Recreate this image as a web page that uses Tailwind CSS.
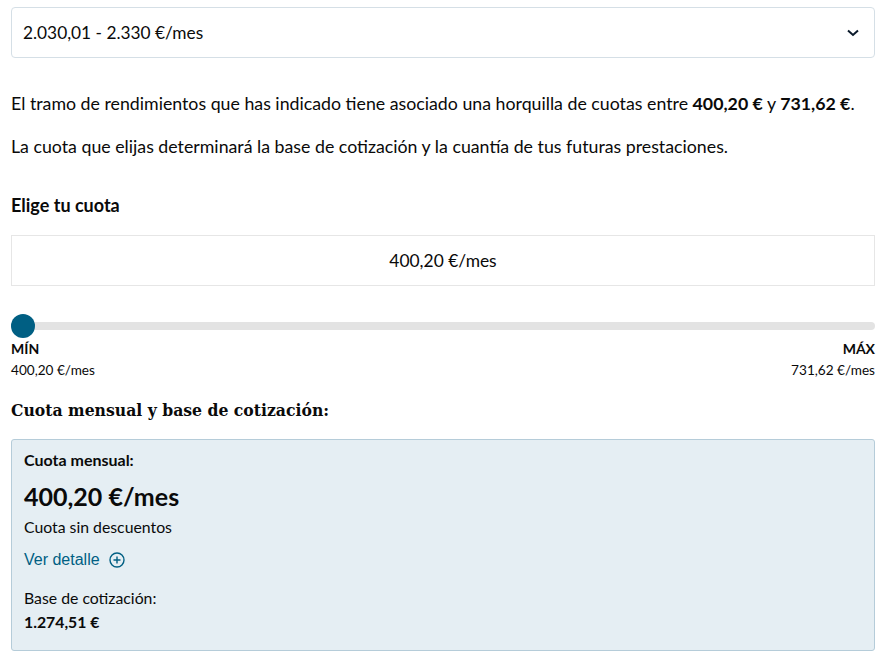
<!DOCTYPE html>
<html lang="es"><head><meta charset="utf-8">
<script src="https://cdn.jsdelivr.net/npm/@tailwindcss/browser@4"></script>
</head>
<body class="bg-white overflow-hidden font-['Lato',sans-serif] text-[#0a0a0a]">
<div class="w-[877px] h-[663px] pl-[11px] pr-[2px] pt-[7px]">
  <div class="h-[51px] border border-[#d5dfe6] rounded-[4px] flex items-center justify-between pl-[11px] pr-[14px] text-[17.3px]">
    <span>2.030,01 - 2.330 €/mes</span>
    <svg class="w-[14px] h-[10px]" viewBox="0 0 14 10" fill="none"><path d="M2 2.5 7 7l5-4.5" stroke="#0b1a2b" stroke-width="2"/></svg>
  </div>
  <p class="mt-[33px] text-[17.76px] leading-[24px] whitespace-nowrap">El tramo de rendimientos que has indicado tiene asociado una horquilla de cuotas entre <b>400,20 €</b> y <b>731,62 €</b>.</p>
  <p class="mt-[19px] text-[17.76px] leading-[24px] whitespace-nowrap">La cuota que elijas determinará la base de cotización y la cuantía de tus futuras prestaciones.</p>
  <h3 class="mt-[35px] text-[18px] leading-[24px] font-bold">Elige tu cuota</h3>
  <div class="mt-[18px] h-[51px] border border-[#e6e6e6] flex items-center justify-center pt-px text-[17.4px]">400,20 €/mes</div>
  <div class="relative mt-[36px] h-[8px] rounded-full bg-[#e3e3e3]">
    <div class="absolute left-0 top-[-8px] w-[24px] h-[24px] rounded-full bg-[#005f83]"></div>
  </div>
  <div class="mt-[8px] flex justify-between text-[13.6px] leading-[21px]">
    <div><div class="font-bold text-[14px]">MÍN</div><div class="mt-px">400,20 €/mes</div></div>
    <div class="text-right"><div class="font-bold text-[14px]">MÁX</div><div class="mt-px">731,62 €/mes</div></div>
  </div>
  <h2 class="mt-[16px] font-['DejaVu_Serif_Condensed','DejaVu_Serif',serif] font-bold text-[17.4px] leading-[26px] whitespace-nowrap">Cuota mensual y base de cotización:</h2>
  <div class="mt-[16px] h-[212px] border border-[#b5ccd9] rounded-[3px] bg-[#e5eef3] pl-[12px] pt-[10px]">
    <div class="font-bold text-[16px] leading-[20px]">Cuota mensual:</div>
    <div class="mt-[10px] font-bold text-[25px] leading-[32px]">400,20 €/mes</div>
    <div class="mt-[5px] text-[15.8px] leading-[20px]">Cuota sin descuentos</div>
    <div class="mt-[13px] flex items-center gap-[9px] font-['Liberation_Sans',sans-serif] text-[16px] leading-[20px] text-[#005f83]">
      <span>Ver detalle</span>
      <svg class="w-[16px] h-[16px]" viewBox="0 0 16 16" fill="none" stroke="#005f83" stroke-width="1.4"><circle cx="8" cy="8" r="7"/><path d="M8 4.5v7M4.5 8h7"/></svg>
    </div>
    <div class="mt-[18px] text-[15.8px] leading-[20px]">Base de cotización:</div>
    <div class="mt-[4px] font-bold text-[15.8px] leading-[20px]">1.274,51 €</div>
  </div>
</div>
</body></html>
